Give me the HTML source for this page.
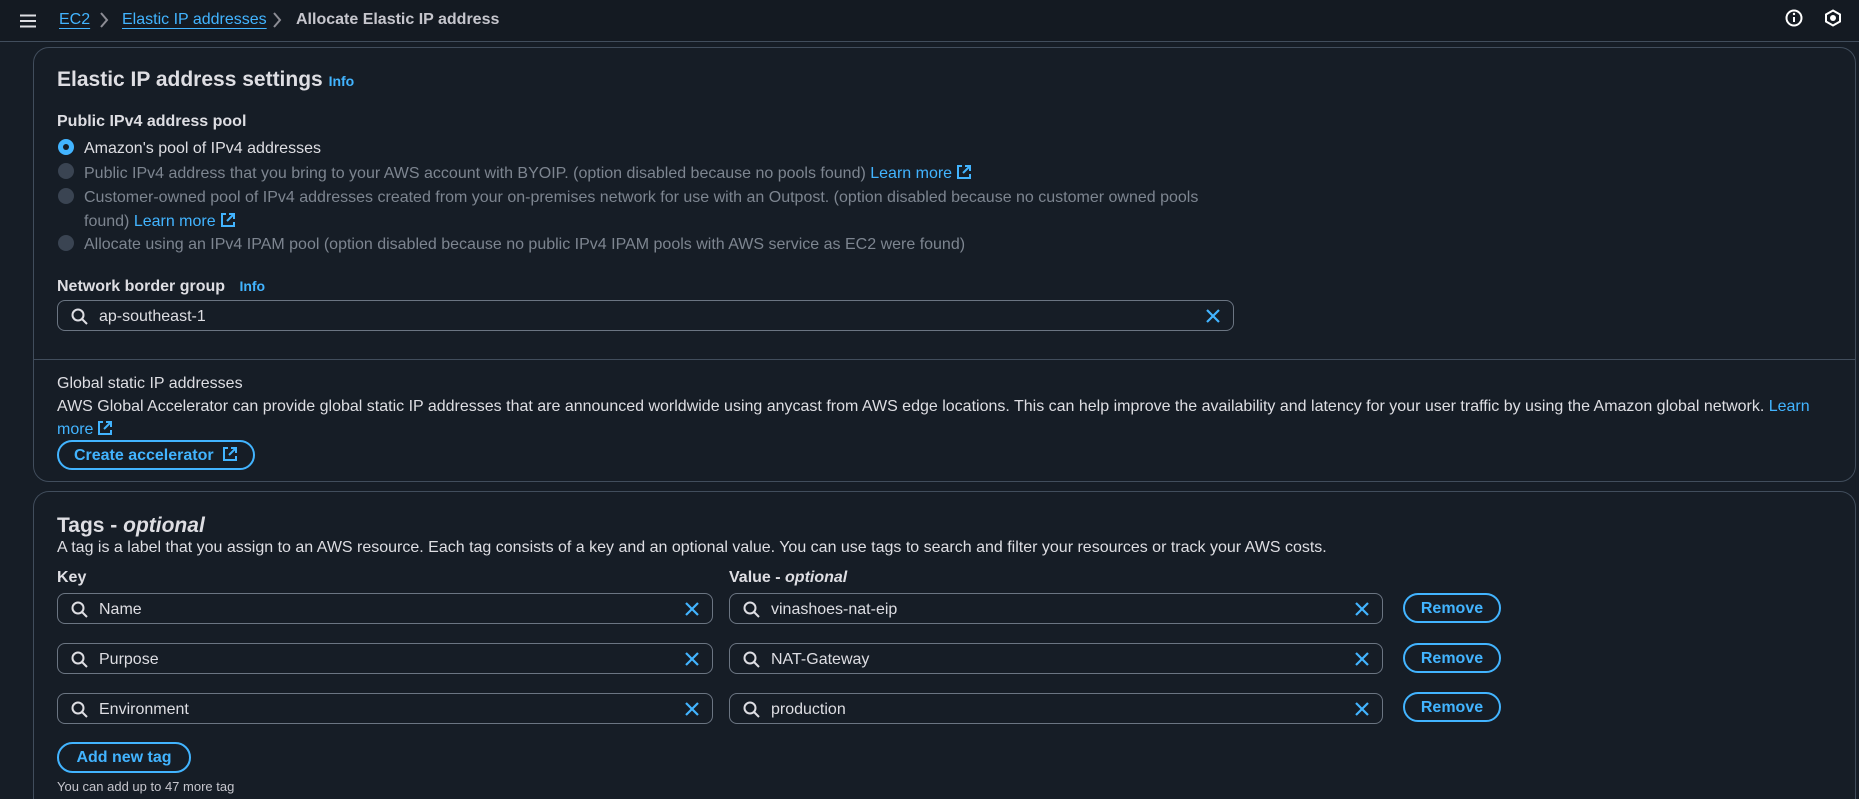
<!DOCTYPE html>
<html style="height:799px;overflow:hidden"><head><meta charset="utf-8"><style>
*{box-sizing:border-box;margin:0;padding:0}
body{width:1859px;height:799px;overflow:hidden;background:#161d26;font-family:"Liberation Sans",sans-serif;color:#dedee3;font-size:16px;position:relative}
.a{position:absolute;white-space:nowrap;margin-top:2px}
.hdr{position:absolute;left:0;top:0;width:1859px;height:42px;border-bottom:1px solid #414d5c;background:#141a22}
.link{color:#42b4ff}
.bc{color:#42b4ff;text-decoration:underline;text-underline-offset:4px}
.card{position:absolute;left:33px;width:1823px;border:1px solid #414d5c;border-radius:16px;background:#161d26}
.b{font-weight:bold}
.dis{color:#7d8590}
.radio{position:absolute;width:16px;height:16px;border-radius:50%;background:#3a4452}
.inp{position:absolute;height:31px;border:1px solid #6b7582;border-radius:8px}
.inp .t{position:absolute;left:41px;top:7px}
.inp svg.s{position:absolute;left:13px;top:7px}
.inp svg.x{position:absolute;right:12px;top:7px}
.btn{position:absolute;border:2px solid #42b4ff;border-radius:20px;color:#42b4ff;font-weight:bold;text-align:center;line-height:27px}
.ext{display:inline-block;vertical-align:-2px;margin-left:4px}
</style></head><body>
<div class="hdr">
<svg class="a" style="left:20px;top:12px" width="16" height="14"><path d="M0 1.5H16M0 7H16M0 12.5H16" stroke="#dedee3" stroke-width="2"/></svg>
<span class="a bc" style="left:59px;top:9px">EC2</span>
<svg class="a" style="left:99px;top:10px" width="10" height="16"><path d="M2 1l6 7-6 7" stroke="#8c8c94" stroke-width="2" fill="none"/></svg>
<span class="a bc" style="left:122px;top:9px">Elastic IP addresses</span>
<svg class="a" style="left:272px;top:10px" width="10" height="16"><path d="M2 1l6 7-6 7" stroke="#8c8c94" stroke-width="2" fill="none"/></svg>
<span class="a b" style="left:296px;top:9px;color:#c6c6cd">Allocate Elastic IP address</span>
<svg class="a" style="left:1785px;top:7px" width="18" height="18"><circle cx="9" cy="9" r="7.5" stroke="#fff" stroke-width="2" fill="none"/><path d="M9 8v5" stroke="#fff" stroke-width="2"/><circle cx="9" cy="5" r="1.2" fill="#fff"/></svg>
<svg class="a" style="left:1824px;top:7px" width="18" height="18"><path d="M9 1.5l7 4v7l-7 4-7-4v-7z" stroke="#fff" stroke-width="2" fill="none"/><circle cx="9" cy="9" r="3" fill="#fff"/></svg>
</div>

<div class="card" style="top:47px;height:435px"></div>
<div class="a b" style="left:57px;top:66px;font-size:21px">Elastic IP address settings <span class="link" style="font-size:14px">Info</span></div>
<div class="a b" style="left:57px;top:111px">Public IPv4 address pool</div>
<div class="radio" style="left:58px;top:139px;background:#42b4ff"><div style="position:absolute;left:5px;top:5px;width:6px;height:6px;border-radius:50%;background:#161d26"></div></div>
<div class="a" style="left:84px;top:138px">Amazon's pool of IPv4 addresses</div>
<div class="radio" style="left:58px;top:163px"></div>
<div class="a dis" style="left:84px;top:162px">Public IPv4 address that you bring to your AWS account with BYOIP. (option disabled because no pools found) <span class="link">Learn more<svg class="ext" width="16" height="16"><path d="M6 2H2v12h12v-4M9 2h5v5M14 2L7 9" stroke="#42b4ff" stroke-width="2" fill="none"/></svg></span></div>
<div class="radio" style="left:58px;top:188px"></div>
<div class="a dis" style="left:84px;top:187px">Customer-owned pool of IPv4 addresses created from your on-premises network for use with an Outpost. (option disabled because no customer owned pools</div>
<div class="a dis" style="left:84px;top:210px">found) <span class="link">Learn more<svg class="ext" width="16" height="16"><path d="M6 2H2v12h12v-4M9 2h5v5M14 2L7 9" stroke="#42b4ff" stroke-width="2" fill="none"/></svg></span></div>
<div class="radio" style="left:58px;top:235px"></div>
<div class="a dis" style="left:84px;top:234px">Allocate using an IPv4 IPAM pool (option disabled because no public IPv4 IPAM pools with AWS service as EC2 were found)</div>
<div class="a b" style="left:57px;top:276px">Network border group <span class="link" style="font-size:14px;margin-left:10px">Info</span></div>
<div class="inp" style="left:57px;top:300px;width:1177px"><svg class="s" width="17" height="17"><circle cx="7" cy="7" r="5.5" stroke="#dedee3" stroke-width="2" fill="none"/><path d="M11 11l5 5" stroke="#dedee3" stroke-width="2"/></svg><span class="t">ap-southeast-1</span><svg class="x" width="16" height="16"><path d="M2 2l12 12M14 2L2 14" stroke="#42b4ff" stroke-width="2.2"/></svg></div>
<div class="a" style="left:34px;top:357px;width:1821px;height:1px;background:#414d5c"></div>
<div class="a" style="left:57px;top:373px">Global static IP addresses</div>
<div class="a" style="left:57px;top:396px">AWS Global Accelerator can provide global static IP addresses that are announced worldwide using anycast from AWS edge locations. This can help improve the availability and latency for your user traffic by using the Amazon global network. <span class="link">Learn</span></div>
<div class="a link" style="left:57px;top:418px">more<svg class="ext" width="16" height="16"><path d="M6 2H2v12h12v-4M9 2h5v5M14 2L7 9" stroke="#42b4ff" stroke-width="2" fill="none"/></svg></div>
<div class="btn" style="left:57px;top:440px;width:198px;height:30px">Create accelerator <svg class="ext" width="16" height="16"><path d="M6 2H2v12h12v-4M9 2h5v5M14 2L7 9" stroke="#42b4ff" stroke-width="2" fill="none"/></svg></div>

<div class="card" style="top:491px;height:308px;border-bottom:none;border-radius:16px 16px 0 0"></div>
<div class="a b" style="left:57px;top:512px;font-size:21px">Tags - <i>optional</i></div>
<div class="a" style="left:57px;top:537px">A tag is a label that you assign to an AWS resource. Each tag consists of a key and an optional value. You can use tags to search and filter your resources or track your AWS costs.</div>
<div class="a b" style="left:57px;top:567px">Key</div>
<div class="a b" style="left:729px;top:567px">Value - <i>optional</i></div>

<div class="inp" style="left:57px;top:593px;width:656px"><svg class="s" width="17" height="17"><circle cx="7" cy="7" r="5.5" stroke="#dedee3" stroke-width="2" fill="none"/><path d="M11 11l5 5" stroke="#dedee3" stroke-width="2"/></svg><span class="t">Name</span><svg class="x" width="16" height="16"><path d="M2 2l12 12M14 2L2 14" stroke="#42b4ff" stroke-width="2.2"/></svg></div>
<div class="inp" style="left:729px;top:593px;width:654px"><svg class="s" width="17" height="17"><circle cx="7" cy="7" r="5.5" stroke="#dedee3" stroke-width="2" fill="none"/><path d="M11 11l5 5" stroke="#dedee3" stroke-width="2"/></svg><span class="t">vinashoes-nat-eip</span><svg class="x" width="16" height="16"><path d="M2 2l12 12M14 2L2 14" stroke="#42b4ff" stroke-width="2.2"/></svg></div>
<div class="btn" style="left:1403px;top:593px;width:98px;height:30px">Remove</div>

<div class="inp" style="left:57px;top:643px;width:656px"><svg class="s" width="17" height="17"><circle cx="7" cy="7" r="5.5" stroke="#dedee3" stroke-width="2" fill="none"/><path d="M11 11l5 5" stroke="#dedee3" stroke-width="2"/></svg><span class="t">Purpose</span><svg class="x" width="16" height="16"><path d="M2 2l12 12M14 2L2 14" stroke="#42b4ff" stroke-width="2.2"/></svg></div>
<div class="inp" style="left:729px;top:643px;width:654px"><svg class="s" width="17" height="17"><circle cx="7" cy="7" r="5.5" stroke="#dedee3" stroke-width="2" fill="none"/><path d="M11 11l5 5" stroke="#dedee3" stroke-width="2"/></svg><span class="t">NAT-Gateway</span><svg class="x" width="16" height="16"><path d="M2 2l12 12M14 2L2 14" stroke="#42b4ff" stroke-width="2.2"/></svg></div>
<div class="btn" style="left:1403px;top:643px;width:98px;height:30px">Remove</div>

<div class="inp" style="left:57px;top:693px;width:656px"><svg class="s" width="17" height="17"><circle cx="7" cy="7" r="5.5" stroke="#dedee3" stroke-width="2" fill="none"/><path d="M11 11l5 5" stroke="#dedee3" stroke-width="2"/></svg><span class="t">Environment</span><svg class="x" width="16" height="16"><path d="M2 2l12 12M14 2L2 14" stroke="#42b4ff" stroke-width="2.2"/></svg></div>
<div class="inp" style="left:729px;top:693px;width:654px"><svg class="s" width="17" height="17"><circle cx="7" cy="7" r="5.5" stroke="#dedee3" stroke-width="2" fill="none"/><path d="M11 11l5 5" stroke="#dedee3" stroke-width="2"/></svg><span class="t">production</span><svg class="x" width="16" height="16"><path d="M2 2l12 12M14 2L2 14" stroke="#42b4ff" stroke-width="2.2"/></svg></div>
<div class="btn" style="left:1403px;top:692px;width:98px;height:30px">Remove</div>

<div class="btn" style="left:57px;top:742px;width:134px;height:31px">Add new tag</div>
<div class="a" style="left:57px;top:777px;font-size:13px;color:#c6c6cd">You can add up to 47 more tag</div>
</body></html>
